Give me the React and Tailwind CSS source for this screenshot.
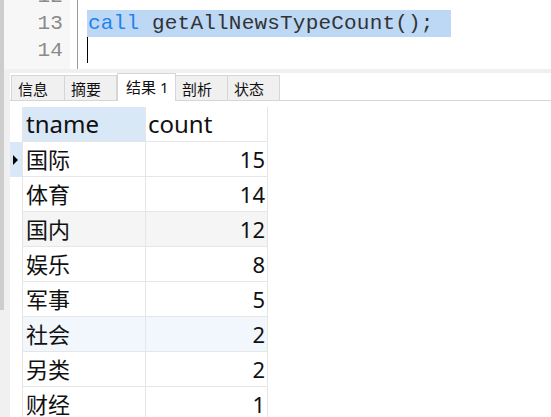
import React from "react";

const rows = [
  { name: "国际", count: 15 },
  { name: "体育", count: 14 },
  { name: "国内", count: 12 },
  { name: "娱乐", count: 8 },
  { name: "军事", count: 5 },
  { name: "社会", count: 2 },
  { name: "另类", count: 2 },
  { name: "财经", count: 1 },
];

const tabs = [
  { key: "info", title: "信息", width: "w-[54px]" },
  { key: "summary", title: "摘要", width: "w-[53px]" },
  { key: "result", title: "结果 1", width: "w-[59px]", active: true },
  { key: "profile", title: "剖析", width: "w-[53px]" },
  { key: "status", title: "状态", width: "w-[53px]" },
];

const mono = "font-['Liberation_Mono',monospace] text-[21px] tracking-[0.2px]";
const ui = "font-['Noto_Sans','Noto_Sans_CJK_SC',sans-serif]";

// Row background: 3rd row striped, 6th row hovered
function rowBg(i) {
  if (i === 2) return "bg-[#f5f5f5]";
  if (i === 5) return "bg-[#f1f7fd]";
  return "bg-white";
}

export default function App() {
  return (
    <div className="w-[551px] h-[417px] flex overflow-hidden bg-white">
      {/* left scrollbar */}
      <div className="w-[4px] flex flex-col shrink-0">
        <div className="h-[310px] bg-[#cdcdcd]" />
        <div className="flex-1 bg-[#f0f0f0]" />
      </div>

      <div className="flex-1 flex flex-col min-w-0">
        {/* editor */}
        <div className="h-[69px] flex overflow-hidden shrink-0">
          <div className={`w-[66px] bg-[#f7f7f7] text-[#8a8a8a] text-right pr-[7px] mt-[-17px] ${mono}`}>
            {["12", "13", "14"].map((n) => (
              <div key={n} className="h-[27px] leading-[27px]">{n}</div>
            ))}
          </div>
          <div className="w-[7px] bg-white" />
          <div className="w-[1px] bg-[#9a9a9a]" />
          <div className={`flex-1 pl-[9px] mt-[-17px] ${mono}`}>
            <div className="h-[27px]" />
            <div className="h-[27px] leading-[27px] w-[364px] bg-[#bcd8f5] pl-[1px] whitespace-pre">
              <span className="text-[#1f82ef]">call</span>
              <span className="text-[#333333]"> getAllNewsTypeCount();</span>
            </div>
            <div className="h-[27px] flex">
              <div className="w-[1px] h-[26px] bg-black" />
            </div>
          </div>
        </div>

        <div className="h-[4px] bg-[#f0f0f0] shrink-0" />

        {/* lower panel */}
        <div className="flex-1 flex min-h-0">
          <div className="w-[6px] bg-[#f0f0f0] shrink-0" />
          <div className="flex-1 flex flex-col min-w-0">
            {/* tabs */}
            <div className={`h-[28px] flex items-end pl-[1px] border-b border-[#d6d6d6] shrink-0 ${ui}`}>
              {tabs.map((tab) =>
                tab.active ? (
                  <div
                    key={tab.key}
                    className={`${tab.width} h-[28px] -mb-px bg-white border border-b-0 border-[#d6d6d6] pl-[8px] pt-[2px] text-[15px] leading-[22px] text-[#111]`}
                  >
                    {tab.title}
                  </div>
                ) : (
                  <div
                    key={tab.key}
                    className={`${tab.width} h-[25px] bg-[#f0f0f0] border border-b-0 border-[#d6d6d6] -ml-px first:ml-0 pl-[6px] pt-[2px] text-[15px] leading-[22px] text-[#111]`}
                  >
                    {tab.title}
                  </div>
                )
              )}
            </div>

            {/* result grid */}
            <div className={`pt-[6px] text-[22px] text-[#111] ${ui}`}>
              <div className="flex h-[35px]">
                <div className="w-[13px] border-r border-[#e6e6e6]" />
                <div className="w-[123px] bg-[#d9e8f7] border-r border-b border-[#e6e6e6] pl-[3px] leading-[34px] text-[24px]">
                  tname
                </div>
                <div className="w-[122px] border-r border-b border-[#e6e6e6] pl-[2px] leading-[34px] text-[24px]">
                  count
                </div>
              </div>
              {rows.map((row, i) => (
                <div key={row.name} className="flex h-[35px]">
                  <div
                    className={`w-[13px] border-r border-[#e6e6e6] flex items-center justify-center ${
                      i === 0 ? "bg-[#d9e8f7]" : "bg-white"
                    }`}
                  >
                    {i === 0 && (
                      <div className="w-0 h-0 border-y-[5px] border-y-transparent border-l-[5px] border-l-black ml-[-1px]" />
                    )}
                  </div>
                  <div className={`w-[123px] border-r border-b border-[#e6e6e6] pl-[3px] leading-[34px] ${rowBg(i)}`}>
                    {row.name}
                  </div>
                  <div className={`w-[122px] border-r border-b border-[#e6e6e6] pr-[2px] text-right leading-[34px] ${rowBg(i)}`}>
                    {row.count}
                  </div>
                </div>
              ))}
            </div>
          </div>
        </div>
      </div>
    </div>
  );
}
